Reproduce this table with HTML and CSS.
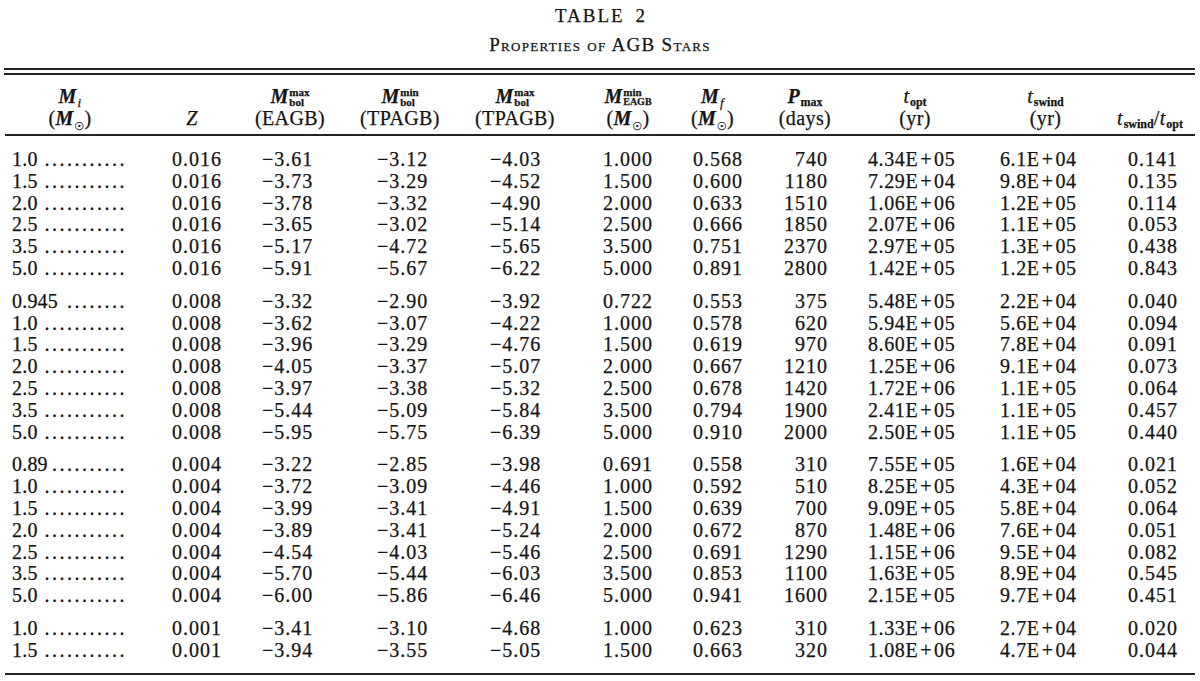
FILE: index.html
```html
<!DOCTYPE html>
<html>
<head>
<meta charset="utf-8">
<link rel="stylesheet" href="styles.css">
</head>
<body>
<div class="page">
  <div class="title">TABLE 2</div>
  <div class="subtitle">Properties of AGB Stars</div>
  <div class="rule-double"></div>

  <div class="head cols">
    <div class="hc">
      <div class="hl"><i class="mb">M</i><sub class="si">i</sub></div>
      <div class="hl">(<i class="mb">M</i><sub class="sun">☉</sub>)</div>
    </div>
    <div class="hc">
      <div class="hl"></div>
      <div class="hl"><i>Z</i></div>
    </div>
    <div class="hc">
      <div class="hl"><i class="mb">M</i><span class="ss"><span>max</span><span>bol</span></span></div>
      <div class="hl">(EAGB)</div>
    </div>
    <div class="hc">
      <div class="hl"><i class="mb">M</i><span class="ss"><span>min</span><span>bol</span></span></div>
      <div class="hl">(TPAGB)</div>
    </div>
    <div class="hc">
      <div class="hl"><i class="mb">M</i><span class="ss"><span>max</span><span>bol</span></span></div>
      <div class="hl">(TPAGB)</div>
    </div>
    <div class="hc">
      <div class="hl"><i class="mb">M</i><span class="ss"><span>min</span><span class="sc">EAGB</span></span></div>
      <div class="hl">(<i class="mb">M</i><sub class="sun">☉</sub>)</div>
    </div>
    <div class="hc">
      <div class="hl"><i class="mb">M</i><sub class="si">f</sub></div>
      <div class="hl">(<i class="mb">M</i><sub class="sun">☉</sub>)</div>
    </div>
    <div class="hc">
      <div class="hl"><i class="mb">P</i><sub class="sw">max</sub></div>
      <div class="hl">(days)</div>
    </div>
    <div class="hc">
      <div class="hl"><i class="tt">t</i><sub class="sw">opt</sub></div>
      <div class="hl">(yr)</div>
    </div>
    <div class="hc">
      <div class="hl"><i class="tt">t</i><sub class="sw">swind</sub></div>
      <div class="hl">(yr)</div>
    </div>
    <div class="hc">
      <div class="hl"></div>
      <div class="hl"><i class="tt">t</i><sub class="sw">swind</sub>/<i class="tt">t</i><sub class="sw">opt</sub></div>
    </div>
  </div>
  <div class="rule"></div>

  <div class="tbody">
    <div class="group">
      <div class="row cols"><span class="lab"><span class="num">1.0</span><span class="dots">...........</span></span><span>0.016</span><span>−3.61</span><span>−3.12</span><span>−4.03</span><span>1.000</span><span>0.568</span><span>740</span><span>4.34E<b class="pl">+</b>05</span><span>6.1E<b class="pl">+</b>04</span><span>0.141</span></div>
      <div class="row cols"><span class="lab"><span class="num">1.5</span><span class="dots">...........</span></span><span>0.016</span><span>−3.73</span><span>−3.29</span><span>−4.52</span><span>1.500</span><span>0.600</span><span>1180</span><span>7.29E<b class="pl">+</b>04</span><span>9.8E<b class="pl">+</b>04</span><span>0.135</span></div>
      <div class="row cols"><span class="lab"><span class="num">2.0</span><span class="dots">...........</span></span><span>0.016</span><span>−3.78</span><span>−3.32</span><span>−4.90</span><span>2.000</span><span>0.633</span><span>1510</span><span>1.06E<b class="pl">+</b>06</span><span>1.2E<b class="pl">+</b>05</span><span>0.114</span></div>
      <div class="row cols"><span class="lab"><span class="num">2.5</span><span class="dots">...........</span></span><span>0.016</span><span>−3.65</span><span>−3.02</span><span>−5.14</span><span>2.500</span><span>0.666</span><span>1850</span><span>2.07E<b class="pl">+</b>06</span><span>1.1E<b class="pl">+</b>05</span><span>0.053</span></div>
      <div class="row cols"><span class="lab"><span class="num">3.5</span><span class="dots">...........</span></span><span>0.016</span><span>−5.17</span><span>−4.72</span><span>−5.65</span><span>3.500</span><span>0.751</span><span>2370</span><span>2.97E<b class="pl">+</b>05</span><span>1.3E<b class="pl">+</b>05</span><span>0.438</span></div>
      <div class="row cols"><span class="lab"><span class="num">5.0</span><span class="dots">...........</span></span><span>0.016</span><span>−5.91</span><span>−5.67</span><span>−6.22</span><span>5.000</span><span>0.891</span><span>2800</span><span>1.42E<b class="pl">+</b>05</span><span>1.2E<b class="pl">+</b>05</span><span>0.843</span></div>
    </div>
    <div class="group">
      <div class="row cols"><span class="lab"><span class="num">0.945</span><span class="dots">........</span></span><span>0.008</span><span>−3.32</span><span>−2.90</span><span>−3.92</span><span>0.722</span><span>0.553</span><span>375</span><span>5.48E<b class="pl">+</b>05</span><span>2.2E<b class="pl">+</b>04</span><span>0.040</span></div>
      <div class="row cols"><span class="lab"><span class="num">1.0</span><span class="dots">...........</span></span><span>0.008</span><span>−3.62</span><span>−3.07</span><span>−4.22</span><span>1.000</span><span>0.578</span><span>620</span><span>5.94E<b class="pl">+</b>05</span><span>5.6E<b class="pl">+</b>04</span><span>0.094</span></div>
      <div class="row cols"><span class="lab"><span class="num">1.5</span><span class="dots">...........</span></span><span>0.008</span><span>−3.96</span><span>−3.29</span><span>−4.76</span><span>1.500</span><span>0.619</span><span>970</span><span>8.60E<b class="pl">+</b>05</span><span>7.8E<b class="pl">+</b>04</span><span>0.091</span></div>
      <div class="row cols"><span class="lab"><span class="num">2.0</span><span class="dots">...........</span></span><span>0.008</span><span>−4.05</span><span>−3.37</span><span>−5.07</span><span>2.000</span><span>0.667</span><span>1210</span><span>1.25E<b class="pl">+</b>06</span><span>9.1E<b class="pl">+</b>04</span><span>0.073</span></div>
      <div class="row cols"><span class="lab"><span class="num">2.5</span><span class="dots">...........</span></span><span>0.008</span><span>−3.97</span><span>−3.38</span><span>−5.32</span><span>2.500</span><span>0.678</span><span>1420</span><span>1.72E<b class="pl">+</b>06</span><span>1.1E<b class="pl">+</b>05</span><span>0.064</span></div>
      <div class="row cols"><span class="lab"><span class="num">3.5</span><span class="dots">...........</span></span><span>0.008</span><span>−5.44</span><span>−5.09</span><span>−5.84</span><span>3.500</span><span>0.794</span><span>1900</span><span>2.41E<b class="pl">+</b>05</span><span>1.1E<b class="pl">+</b>05</span><span>0.457</span></div>
      <div class="row cols"><span class="lab"><span class="num">5.0</span><span class="dots">...........</span></span><span>0.008</span><span>−5.95</span><span>−5.75</span><span>−6.39</span><span>5.000</span><span>0.910</span><span>2000</span><span>2.50E<b class="pl">+</b>05</span><span>1.1E<b class="pl">+</b>05</span><span>0.440</span></div>
    </div>
    <div class="group">
      <div class="row cols"><span class="lab"><span class="num">0.89</span><span class="dots">..........</span></span><span>0.004</span><span>−3.22</span><span>−2.85</span><span>−3.98</span><span>0.691</span><span>0.558</span><span>310</span><span>7.55E<b class="pl">+</b>05</span><span>1.6E<b class="pl">+</b>04</span><span>0.021</span></div>
      <div class="row cols"><span class="lab"><span class="num">1.0</span><span class="dots">...........</span></span><span>0.004</span><span>−3.72</span><span>−3.09</span><span>−4.46</span><span>1.000</span><span>0.592</span><span>510</span><span>8.25E<b class="pl">+</b>05</span><span>4.3E<b class="pl">+</b>04</span><span>0.052</span></div>
      <div class="row cols"><span class="lab"><span class="num">1.5</span><span class="dots">...........</span></span><span>0.004</span><span>−3.99</span><span>−3.41</span><span>−4.91</span><span>1.500</span><span>0.639</span><span>700</span><span>9.09E<b class="pl">+</b>05</span><span>5.8E<b class="pl">+</b>04</span><span>0.064</span></div>
      <div class="row cols"><span class="lab"><span class="num">2.0</span><span class="dots">...........</span></span><span>0.004</span><span>−3.89</span><span>−3.41</span><span>−5.24</span><span>2.000</span><span>0.672</span><span>870</span><span>1.48E<b class="pl">+</b>06</span><span>7.6E<b class="pl">+</b>04</span><span>0.051</span></div>
      <div class="row cols"><span class="lab"><span class="num">2.5</span><span class="dots">...........</span></span><span>0.004</span><span>−4.54</span><span>−4.03</span><span>−5.46</span><span>2.500</span><span>0.691</span><span>1290</span><span>1.15E<b class="pl">+</b>06</span><span>9.5E<b class="pl">+</b>04</span><span>0.082</span></div>
      <div class="row cols"><span class="lab"><span class="num">3.5</span><span class="dots">...........</span></span><span>0.004</span><span>−5.70</span><span>−5.44</span><span>−6.03</span><span>3.500</span><span>0.853</span><span>1100</span><span>1.63E<b class="pl">+</b>05</span><span>8.9E<b class="pl">+</b>04</span><span>0.545</span></div>
      <div class="row cols"><span class="lab"><span class="num">5.0</span><span class="dots">...........</span></span><span>0.004</span><span>−6.00</span><span>−5.86</span><span>−6.46</span><span>5.000</span><span>0.941</span><span>1600</span><span>2.15E<b class="pl">+</b>05</span><span>9.7E<b class="pl">+</b>04</span><span>0.451</span></div>
    </div>
    <div class="group">
      <div class="row cols"><span class="lab"><span class="num">1.0</span><span class="dots">...........</span></span><span>0.001</span><span>−3.41</span><span>−3.10</span><span>−4.68</span><span>1.000</span><span>0.623</span><span>310</span><span>1.33E<b class="pl">+</b>06</span><span>2.7E<b class="pl">+</b>04</span><span>0.020</span></div>
      <div class="row cols"><span class="lab"><span class="num">1.5</span><span class="dots">...........</span></span><span>0.001</span><span>−3.94</span><span>−3.55</span><span>−5.05</span><span>1.500</span><span>0.663</span><span>320</span><span>1.08E<b class="pl">+</b>06</span><span>4.7E<b class="pl">+</b>04</span><span>0.044</span></div>
    </div>
  </div>
  <div class="rule"></div>
</div>
</body>
</html>
```

FILE: styles.css
```css
html, body {
  margin: 0;
  padding: 0;
  background: #ffffff;
}

.page {
  width: 1200px;
  height: 681px;
  overflow: hidden;
  font-family: "Liberation Serif", "Times New Roman", serif;
  color: #141414;
  font-size: 20px;
  -webkit-text-stroke: 0.25px #141414;
}

.title {
  padding-top: 5px;
  height: 22px;
  line-height: 22px;
  font-size: 19px;
  text-align: center;
  letter-spacing: 2px;
  word-spacing: 4px;
  padding-left: 2px;
}

.subtitle {
  margin-top: 7px;
  height: 22px;
  line-height: 22px;
  font-size: 19px;
  font-variant: small-caps;
  text-align: center;
  letter-spacing: 1.3px;
}

.rule-double {
  margin: 12px 5px 0 4px;
  height: 3px;
  border-top: 2px solid #222;
  border-bottom: 2px solid #222;
}

.rule {
  margin: 0 5px 0 5px;
  height: 0;
  border-top: 2px solid #222;
}

.cols {
  display: grid;
  grid-template-columns: 160px 90px 100px 110px 120px 90px 85px 90px 140px 115px 100px;
}

/* header */
.head {
  padding-top: 11px;
  padding-bottom: 5px;
}

.hc {
  display: flex;
  flex-direction: column;
  align-items: center;
}

.hl {
  height: 21px;
  line-height: 21px;
  white-space: nowrap;
  letter-spacing: 0.4px;
}

.hl + .hl {
  margin-top: 1px;
}

.hc:nth-child(1) { padding-right: 20px; }
.hc:nth-child(2) { padding-right: 26px; }
.hc:nth-child(3) { padding-right: 20px; }
.hc:nth-child(4) { padding-right: 10px; }
.hc:nth-child(5) { padding-right: 10px; }
.hc:nth-child(6) { padding-left: 6px; }
.hc:nth-child(8) { padding-left: 10px; }
.hc:nth-child(10) { padding-left: 6px; }

.mb {
  font-weight: bold;
  letter-spacing: 0;
}

.tt {
  letter-spacing: 0;
}

sub {
  line-height: 0;
}

.si {
  font-style: italic;
  font-size: 13px;
  vertical-align: -4px;
  margin-left: 1px;
}

.sun {
  font-family: "DejaVu Sans", sans-serif;
  font-size: 11px;
  vertical-align: -5px;
  margin-left: 1px;
}

.sw {
  font-size: 12px;
  font-weight: bold;
  vertical-align: -3px;
  letter-spacing: 0;
  margin-left: 1px;
}

.ss {
  display: inline-flex;
  flex-direction: column;
  align-items: flex-start;
  font-size: 11px;
  line-height: 10px;
  vertical-align: 7px;
  margin-left: 1px;
  letter-spacing: 0;
  font-weight: bold;
}

.ss .sc {
  font-size: 10px;
}

/* body */
.tbody {
  padding-top: 13px;
  padding-bottom: 11px;
}

.group + .group {
  margin-top: 11px;
}

.row {
  height: 21.8px;
  line-height: 21.8px;
  white-space: nowrap;
  letter-spacing: 1px;
}

.row > span { display: block; }

.lab {
  display: flex !important;
  justify-content: space-between;
  padding-left: 12px;
  padding-right: 33px;
}

.num {
  letter-spacing: 0.2px;
}

.dots {
  letter-spacing: 2.5px;
}

.row > span:nth-child(2) { padding-left: 12px; }
.row > span:nth-child(3) { padding-left: 12px; }
.row > span:nth-child(4) { padding-left: 27px; }
.row > span:nth-child(5) { padding-left: 30px; }
.row > span:nth-child(6) { padding-left: 23px; }
.row > span:nth-child(7) { padding-left: 23px; }
.row > span:nth-child(8) { text-align: right; padding-right: 17px; }
.row > span:nth-child(9) { padding-left: 23px; letter-spacing: 0.6px; }
.row > span:nth-child(10) { padding-left: 15px; letter-spacing: 0.6px; }
.row > span:nth-child(11) { padding-left: 28px; }

.pl {
  font-weight: normal;
  margin: 0 2px;
}
```
